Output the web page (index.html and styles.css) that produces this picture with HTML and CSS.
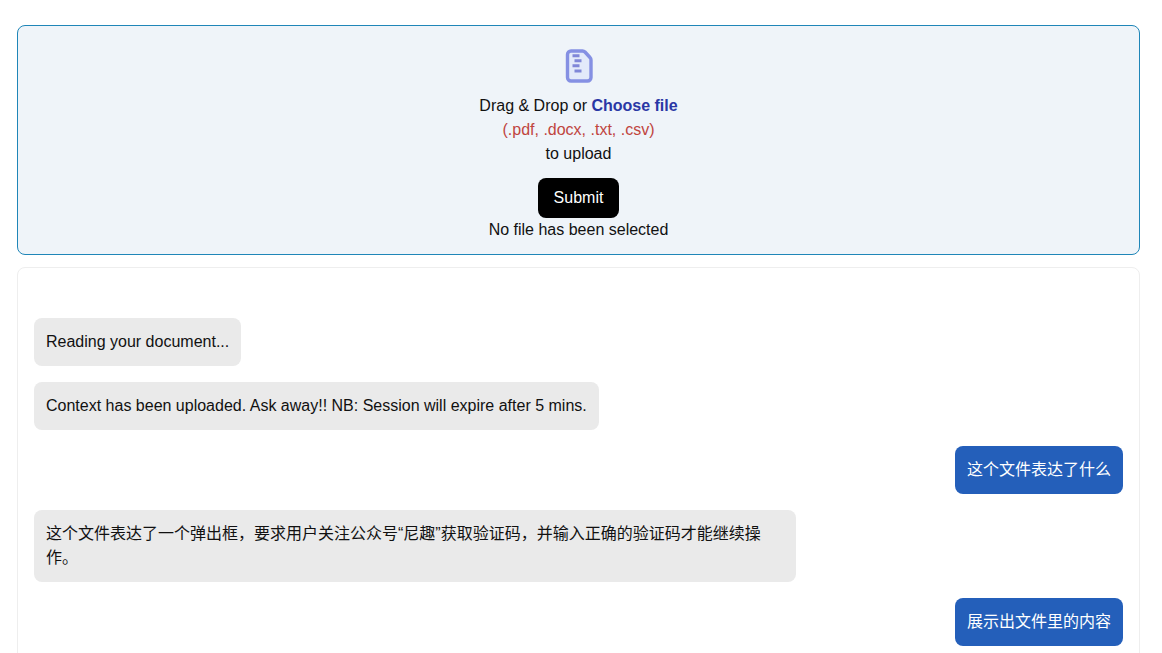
FILE: index.html
```html
<!DOCTYPE html>
<html lang="zh-CN">
<head>
<meta charset="utf-8">
<meta name="viewport" content="width=device-width, initial-scale=1">
<title>Document chat</title>
<link rel="stylesheet" href="styles.css">
</head>
<body>
<main class="page">
  <form class="upload">
    <svg class="upload-icon" viewBox="0 0 40 40" aria-hidden="true">
      <path d="M12 5H23.500Q25 5 26 6L31 11.500Q32 12.500 32 14V31.500A3.500 3.500 0 0 1 28.500 35H12A3.500 3.500 0 0 1 8.500 31.500V8.500A3.500 3.500 0 0 1 12 5z" fill="#e3eafa" stroke="#8590e3" stroke-width="3.400" stroke-linejoin="round"/>
      <path d="M13.500 9.700h7M15.500 14.700h7M13.500 19.700h7M15.500 25h7" fill="none" stroke="#8087d8" stroke-width="3"/>
    </svg>
    <p class="line">Drag &amp; Drop or <label class="choose" for="file">Choose file</label></p>
    <input class="file-input" type="file" id="file" accept=".pdf,.docx,.txt,.csv">
    <p class="line formats">(.pdf, .docx, .txt, .csv)</p>
    <p class="line">to upload</p>
    <button class="submit" type="button">Submit</button>
    <p class="line">No file has been selected</p>
  </form>
  <section class="chat">
    <p class="message">Reading your document...</p>
    <p class="message">Context has been uploaded. Ask away!! NB: Session will expire after 5 mins.</p>
    <p class="message user">这个文件表达了什么</p>
    <p class="message">这个文件表达了一个弹出框，要求用户关注公众号“尼趣”获取验证码，并输入正确的验证码才能继续操作。</p>
    <p class="message user">展示出文件里的内容</p>
  </section>
</main>
</body>
</html>
```
FILE: styles.css
```css
* {
  box-sizing: border-box;
}

body {
  margin: 0;
  background: #fff;
  color: #111;
  font: 16px/24px "Liberation Sans", Arial, "Noto Sans CJK SC", sans-serif;
}

p {
  margin: 0;
}

.page {
  display: flex;
  flex-direction: column;
  gap: 12px;
  height: 100vh;
  padding: 25px 22px 0 17px;
  overflow-y: auto;
  scrollbar-width: none;
}

.upload {
  display: flex;
  flex-direction: column;
  flex-shrink: 0;
  align-items: center;
  padding: 20px 16px 12px;
  border: 1px solid #1f86b8;
  border-radius: 8px;
  background: #eff4f9;
}

.upload-icon {
  width: 40px;
  height: 40px;
  margin-bottom: 8px;
}

.choose {
  color: #2a37a5;
  font-weight: 700;
  cursor: pointer;
}

.file-input {
  display: none;
}

.formats {
  color: #c0453f;
}

.submit {
  height: 40px;
  margin-top: 12px;
  padding: 0 16px;
  border: 0;
  border-radius: 8px;
  background: #000;
  color: #fff;
  font: inherit;
}

.chat {
  display: flex;
  flex-direction: column;
  flex-shrink: 0;
  align-items: flex-start;
  gap: 16px;
  padding: 50px 16px 16px;
  border: 1px solid #eee;
  border-radius: 8px;
}

.message {
  max-width: 70%;
  padding: 12px;
  border-radius: 8px;
  background: #eaeaea;
}

.user {
  align-self: flex-end;
  background: #245fba;
  color: #fff;
}
```
